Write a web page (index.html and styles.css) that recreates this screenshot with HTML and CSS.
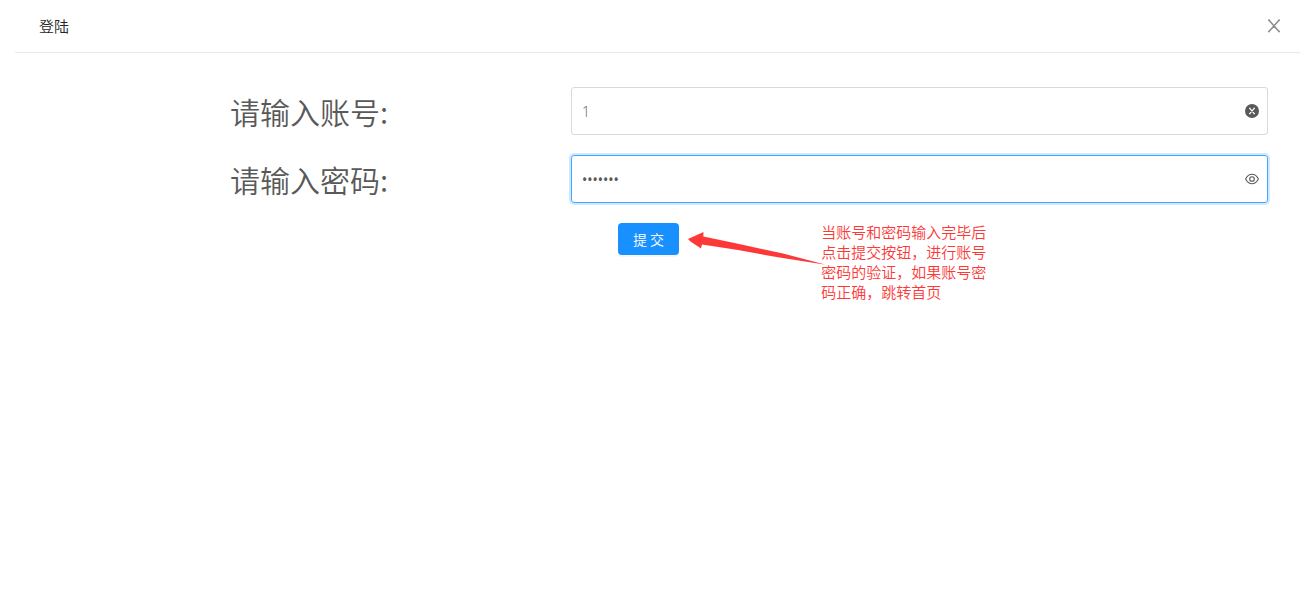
FILE: index.html
```html
<!DOCTYPE html>
<html lang="zh-CN">
<head>
<meta charset="utf-8">
<meta name="viewport" content="width=device-width, initial-scale=1">
<title>登陆</title>
<link rel="stylesheet" href="styles.css">
</head>
<body>
<main class="dialog">
  <header class="dialog-header">
    <h1 class="dialog-title">登陆</h1>
    <button class="close" type="button" aria-label="关闭">
      <svg width="14" height="14" viewBox="0 0 14 14" fill="none" stroke="currentColor" stroke-width="1.5"><path d="M2 1.200 12 12.600M12 1.200 2 12.600M1 1.200H3M11 1.200h2M1 12.600H3M11 12.600h2"/></svg>
    </button>
  </header>
  <form class="form">
    <label class="label" for="account">请输入账号:</label>
    <div class="field">
      <input class="input" id="account" type="text" value="1">
      <button class="suffix" type="button" aria-label="清除">
        <svg width="14" height="14" viewBox="0 0 14 14"><circle cx="7" cy="7" r="7" fill="currentColor"/><path d="M4.8 4.3 9.2 9.7M9.2 4.3 4.8 9.7M4.1 4.3h1.5M8.4 4.3h1.5M4.1 9.7h1.5M8.4 9.7h1.5" fill="none" stroke="#fff" stroke-width="1.2"/></svg>
      </button>
    </div>
    <label class="label" for="password">请输入密码:</label>
    <div class="field field-focused">
      <input class="input input-password" id="password" type="password" value="1234567">
      <button class="suffix" type="button" aria-label="显示密码">
        <svg width="14" height="14" viewBox="0 0 14 14" fill="none" stroke="currentColor" stroke-width="1.1"><path d="M.6 7Q3 2.300 7 2.300T13.400 7Q11 11.700 7 11.700T.6 7Z"/><circle cx="7" cy="7" r="2.300"/></svg>
      </button>
    </div>
    <div class="actions">
      <button class="submit" type="button">提 交</button>
      <svg class="arrow" width="137" height="36" viewBox="0 0 137 36"><path d="M0 8 15.500 1 15.300 5.500 50 12.800 95 22.500 137 33.500 133 33 90 26.300 50 19 14 13.500 13 17.500 2.500 10.500Z" fill="#fd3938"/></svg>
      <p class="note">当账号和密码输入完毕后点击提交按钮，进行账号密码的验证，如果账号密码正确，跳转首页</p>
    </div>
  </form>
</main>
</body>
</html>
```
FILE: styles.css
```css
* {
  box-sizing: border-box;
}

body {
  margin: 0;
  background: #fff;
  color: #595959;
  font-family: "Noto Sans CJK SC", sans-serif;
  font-size: 14px;
}

.dialog {
  margin-left: 15px;
}

.dialog-header {
  display: flex;
  align-items: center;
  justify-content: space-between;
  padding: 15px 19px 15px 24px;
  border-bottom: 1px solid #e8e8e8;
}

.dialog-title {
  margin: 0;
  color: #262626;
  font-size: 15px;
  font-weight: 350;
  line-height: 22px;
}

.close,
.suffix {
  display: flex;
  padding: 0;
  border: 0;
  background: none;
  cursor: pointer;
}

.close {
  color: #8c8c8c;
}

.suffix {
  color: #595959;
}

.form {
  display: grid;
  grid-template-columns: 341fr 697fr;
  row-gap: 20px;
  padding: 34px 32px 24px 215px;
}

.label {
  font-size: 30px;
  font-weight: 350;
  line-height: 48px;
}

.field {
  display: flex;
  align-items: center;
  height: 48px;
  padding: 0 8px 0 10px;
  border: 1px solid #d9d9d9;
  border-radius: 3px;
}

.field-focused {
  border-color: #40a9ff;
  box-shadow: 0 0 0 2px rgba(24, 144, 255, 0.2);
}

.input {
  flex: 1;
  min-width: 0;
  padding: 0;
  border: 0;
  outline: 0;
  background: none;
  color: #595959;
  font-family: "Open Sans", sans-serif;
  font-size: 14px;
  font-weight: 300;
}

.input-password {
  font-family: "Noto Sans", sans-serif;
  font-weight: 400;
}

.actions {
  grid-column: 2;
  display: flex;
  align-items: flex-start;
  padding-left: 47px;
}

.submit {
  height: 32px;
  padding: 0 15px;
  border: 0;
  border-radius: 4px;
  background: #1890ff;
  box-shadow: 0 2px 0 rgba(0, 0, 0, 0.04);
  color: #fff;
  font: inherit;
  font-weight: 350;
  line-height: 30px;
  cursor: pointer;
}

.arrow {
  flex: none;
  margin: 8px 0 0 9px;
}

.note {
  width: 11em;
  margin: -1px 0 0 -4px;
  color: #fd3938;
  font-size: 15px;
  font-weight: 350;
  line-height: 20px;
}
```
